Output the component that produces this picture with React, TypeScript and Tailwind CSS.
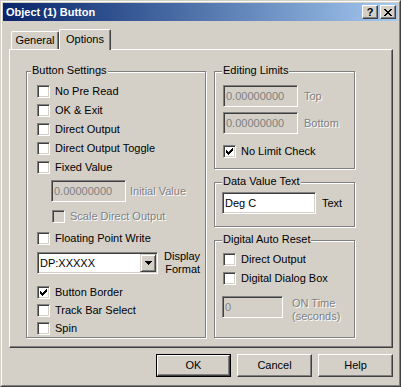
import React from 'react';

type CheckProps = { checked?: boolean; disabled?: boolean };

function CheckMark() {
  return (
    <svg width="7" height="7" viewBox="0 0 7 7" shapeRendering="crispEdges">
      <rect x="0" y="2" width="1" height="3" fill="#000" />
      <rect x="1" y="3" width="1" height="3" fill="#000" />
      <rect x="2" y="4" width="1" height="3" fill="#000" />
      <rect x="3" y="3" width="1" height="3" fill="#000" />
      <rect x="4" y="2" width="1" height="3" fill="#000" />
      <rect x="5" y="1" width="1" height="3" fill="#000" />
      <rect x="6" y="0" width="1" height="3" fill="#000" />
    </svg>
  );
}

function Checkbox({ checked, disabled }: CheckProps) {
  return (
    <span
      className={
        'flex h-[13px] w-[13px] shrink-0 items-center justify-center border border-t-[#808080] border-l-[#808080] border-b-white border-r-white shadow-[inset_1px_1px_0_#404040,inset_-1px_-1px_0_#d4d0c8] ' +
        (disabled ? 'bg-[#d4d0c8]' : 'bg-white')
      }
    >
      {checked && <CheckMark />}
    </span>
  );
}

function CheckRow({ label, checked, disabled }: CheckProps & { label: string }) {
  return (
    <div className="flex h-[13px] items-center gap-[5px]">
      <Checkbox checked={checked} disabled={disabled} />
      <span className={'leading-[13px] ' + (disabled ? 'text-[#808080] [text-shadow:1px_1px_0_#fff]' : 'text-black')}>
        {label}
      </span>
    </div>
  );
}

function Edit({ value, width, disabled }: { value: string; width: string; disabled?: boolean }) {
  return (
    <div
      className={
        'flex h-[22px] shrink-0 items-center border border-t-[#808080] border-l-[#808080] border-b-white border-r-white pl-[2px] shadow-[inset_1px_1px_0_#404040,inset_-1px_-1px_0_#d4d0c8] ' +
        width +
        (disabled ? ' bg-[#d4d0c8] text-[#808080]' : ' bg-white text-black')
      }
    >
      <span className="leading-[13px]">{value}</span>
    </div>
  );
}

function DimLabel({ children }: { children: React.ReactNode }) {
  return <span className="leading-[13px] text-[#808080] [text-shadow:1px_1px_0_#fff]">{children}</span>;
}

// etched group box, title sits on the top line
function Group({
  title,
  titleClass,
  className,
  bodyClass,
  children,
}: {
  title: string;
  titleClass: string;
  className: string;
  bodyClass: string;
  children: React.ReactNode;
}) {
  return (
    <div className={'flex flex-col border border-[#808080] shadow-[1px_1px_0_#fff,inset_1px_1px_0_#fff] ' + className}>
      <span className={'-mt-[8px] w-fit bg-[#d4d0c8] px-[1px] leading-[13px] ' + titleClass}>{title}</span>
      <div className={'flex flex-col ' + bodyClass}>{children}</div>
    </div>
  );
}

function Button({ label, isDefault }: { label: string; isDefault?: boolean }) {
  const inner = (
    <div className="flex h-full w-full items-center justify-center border border-t-white border-l-white border-b-[#404040] border-r-[#404040] shadow-[inset_-1px_-1px_0_#808080]">
      {label}
    </div>
  );
  return isDefault ? (
    <div className="h-[23px] w-[75px] border border-black">{inner}</div>
  ) : (
    <div className="h-[23px] w-[75px]">{inner}</div>
  );
}

export default function App() {
  return (
    <div className="h-[387px] w-[401px] bg-[#d4d0c8] font-['Liberation_Sans',Arial,sans-serif] text-[11px] text-black">
      <div className="h-full w-full border border-t-[#d4d0c8] border-l-[#d4d0c8] border-b-[#404040] border-r-[#404040]">
        <div className="flex h-full w-full flex-col border border-t-white border-l-white border-b-[#808080] border-r-[#808080] p-[1px]">
          {/* title bar */}
          <div className="flex h-[18px] items-center bg-gradient-to-r from-[#0a246a] to-[#a6caf0] pl-[3px] pr-[2px]">
            <span className="flex-1 text-[11px] font-bold leading-[13px] text-white">Object (1) Button</span>
            <div className="flex h-[14px] w-[16px] items-center justify-center border border-t-white border-l-white border-b-[#404040] border-r-[#404040] bg-[#d4d0c8] text-[11px] font-bold leading-none shadow-[inset_-1px_-1px_0_#808080]">
              ?
            </div>
            <div className="ml-[2px] flex h-[14px] w-[16px] items-center justify-center border border-t-white border-l-white border-b-[#404040] border-r-[#404040] bg-[#d4d0c8] shadow-[inset_-1px_-1px_0_#808080]">
              <svg width="8" height="7" viewBox="0 0 8 7" shapeRendering="crispEdges">
                <path d="M0 0h2v1H0zM6 0h2v1H6zM1 1h2v1H1zM5 1h2v1H5zM2 2h4v1H2zM3 3h2v1H3zM2 4h4v1H2zM1 5h2v1H1zM5 5h2v1H5zM0 6h2v1H0zM6 6h2v1H6z" fill="#000" />
              </svg>
            </div>
          </div>

          {/* tabs */}
          <div className="ml-[6px] mt-[8px] flex h-[20px] items-end pl-[2px]">
            <div className="flex h-[18px] w-[48px] items-center justify-center rounded-t-[2px] border-l border-t border-r border-l-white border-t-white border-r-[#404040] shadow-[inset_-1px_0_0_#808080]">
              <span className="leading-[13px]">General</span>
            </div>
            <div className="relative z-10 -mb-[1px] flex h-[21px] w-[52px] items-start justify-center rounded-t-[2px] border-l border-t border-r border-l-white border-t-white border-r-[#404040] bg-[#d4d0c8] pt-[3px] shadow-[inset_-1px_0_0_#808080]">
              <span className="leading-[13px]">Options</span>
            </div>
          </div>

          {/* panel */}
          <div className="ml-[6px] flex h-[299px] w-[384px] border border-t-white border-l-white border-b-[#404040] border-r-[#404040] pl-[16px] pt-[21px] shadow-[inset_-1px_-1px_0_#808080]">
            <Group title="Button Settings" titleClass="ml-[4px]" className="h-[267px] w-[180px]" bodyClass="pl-[10px]">
              <div className="mt-[8px] flex flex-col gap-[6px]">
                <CheckRow label="No Pre Read" />
                <CheckRow label="OK & Exit" />
                <CheckRow label="Direct Output" />
                <CheckRow label="Direct Output Toggle" />
                <CheckRow label="Fixed Value" />
              </div>
              <div className="ml-[14px] mt-[6px] flex items-center gap-[4px]">
                <Edit value="0.00000000" width="w-[75px]" disabled />
                <DimLabel>Initial Value</DimLabel>
              </div>
              <div className="ml-[15px] mt-[8px]">
                <CheckRow label="Scale Direct Output" disabled />
              </div>
              <div className="mt-[9px]">
                <CheckRow label="Floating Point Write" />
              </div>
              <div className="mt-[5px] flex items-center gap-[6px]">
                <div className="flex h-[22px] w-[121px] items-center border border-t-[#808080] border-l-[#808080] border-b-white border-r-white bg-white pl-[2px] shadow-[inset_1px_1px_0_#404040,inset_-1px_-1px_0_#d4d0c8]">
                  <span className="flex-1 leading-[13px]">DP:XXXXX</span>
                  <div className="mr-[1px] flex h-[18px] w-[16px] items-center justify-center border border-t-[#d4d0c8] border-l-[#d4d0c8] border-b-[#404040] border-r-[#404040] bg-[#d4d0c8] shadow-[inset_1px_1px_0_#fff,inset_-1px_-1px_0_#808080]">
                    <svg width="7" height="4" viewBox="0 0 7 4" shapeRendering="crispEdges">
                      <path d="M0 0h7v1H0zM1 1h5v1H1zM2 2h3v1H2zM3 3h1v1H3z" fill="#000" />
                    </svg>
                  </div>
                </div>
                <div className="flex flex-col text-right leading-[13px]">
                  <span>Display</span>
                  <span>Format</span>
                </div>
              </div>
              <div className="mt-[10px] flex flex-col gap-[5px]">
                <CheckRow label="Button Border" checked />
                <CheckRow label="Track Bar Select" />
                <CheckRow label="Spin" />
              </div>
            </Group>

            <div className="ml-[8px] flex w-[141px] flex-col gap-[13px]">
              <Group title="Editing Limits" titleClass="ml-[7px]" className="h-[98px]" bodyClass="pl-[8px]">
                <div className="mt-[8px] flex items-center gap-[6px]">
                  <Edit value="0.00000000" width="w-[75px]" disabled />
                  <DimLabel>Top</DimLabel>
                </div>
                <div className="mt-[5px] flex items-center gap-[6px]">
                  <Edit value="0.00000000" width="w-[75px]" disabled />
                  <DimLabel>Bottom</DimLabel>
                </div>
                <div className="mt-[11px]">
                  <CheckRow label="No Limit Check" checked />
                </div>
              </Group>

              <Group title="Data Value Text" titleClass="ml-[7px]" className="h-[45px]" bodyClass="pl-[7px]">
                <div className="mt-[4px] flex items-center gap-[6px]">
                  <Edit value="Deg C" width="w-[94px]" />
                  <span className="leading-[13px]">Text</span>
                </div>
              </Group>

              <Group title="Digital Auto Reset" titleClass="ml-[7px]" className="h-[98px]" bodyClass="pl-[8px]">
                <div className="mt-[7px] flex flex-col gap-[6px]">
                  <CheckRow label="Direct Output" />
                  <CheckRow label="Digital Dialog Box" />
                </div>
                <div className="-ml-[1px] mt-[11px] flex items-start gap-[9px]">
                  <Edit value="0" width="w-[61px]" disabled />
                  <div className="flex flex-col pt-[1px]">
                    <DimLabel>ON Time</DimLabel>
                    <DimLabel>(seconds)</DimLabel>
                  </div>
                </div>
              </Group>
            </div>
          </div>

          {/* buttons */}
          <div className="ml-[6px] mt-[6px] flex w-[384px] justify-end gap-[6px]">
            <Button label="OK" isDefault />
            <Button label="Cancel" />
            <Button label="Help" />
          </div>
        </div>
      </div>
    </div>
  );
}
